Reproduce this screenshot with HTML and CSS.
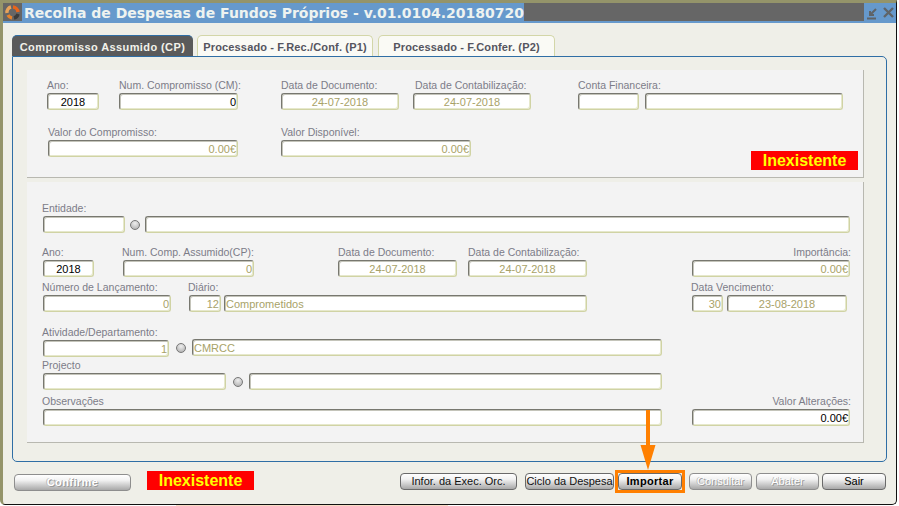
FILE: index.html
```html
<!DOCTYPE html>
<html lang="pt-PT">
<head>
  <meta charset="UTF-8">
  <title>Recolha de Despesas de Fundos Próprios</title>
  <link rel="stylesheet" href="styles.css">
</head>
<body>

  <div class="janela">

    <div class="titulo">
      <div class="titulo-icone">
        <svg width="17" height="17" viewBox="0 0 17 17">
          <path d="M9 3 A5.5 5.5 0 0 1 14 8" fill="none" stroke="#e8651a" stroke-width="3.4"/>
          <path d="M3 9 A5.5 5.5 0 0 1 7 3" fill="none" stroke="#e8a35a" stroke-width="3.4"/>
          <path d="M4 11 A5.5 5.5 0 0 0 8 14" fill="none" stroke="#e8832a" stroke-width="3.4"/>
          <path d="M10 14 A5.5 5.5 0 0 0 14 10" fill="none" stroke="#3c3c3c" stroke-width="3.4"/>
        </svg>
      </div>
      <div class="titulo-texto">Recolha de Despesas de Fundos Próprios - v.01.0104.20180720</div>
      <div class="titulo-botoes">
        <svg width="32" height="20" viewBox="0 0 32 20">
          <path d="M3 15.5 H12 M12 6 L6 12 M6 8 V12 H10" fill="none" stroke="#5f6468" stroke-width="2"/>
          <path d="M20 5 L29 14 M29 5 L20 14" fill="none" stroke="#5f6468" stroke-width="2.4"/>
        </svg>
      </div>
    </div>

    <div class="tabs">
      <div class="tab ativo">Compromisso Assumido (CP)</div>
      <div class="tab tab-p1">Processado - F.Rec./Conf. (P1)</div>
      <div class="tab tab-p2">Processado - F.Confer. (P2)</div>
    </div>

    <div class="tab-corpo">

      <div class="painel painel-cm">
        <div class="linha">
          <div class="campo c-ano-cm"><label>Ano:</label><div class="caixa centro preto">2018</div></div>
          <div class="campo c-num-cm"><label>Num. Compromisso (CM):</label><div class="caixa direita preto">0</div></div>
          <div class="campo c-doc-cm"><label>Data de Documento:</label><div class="caixa centro">24-07-2018</div></div>
          <div class="campo c-cont-cm"><label class="desvio">Data de Contabilização:</label><div class="caixa centro">24-07-2018</div></div>
          <div class="campo c-conta"><label>Conta Financeira:</label><div class="caixa"></div></div>
          <div class="campo c-conta-nome"><label></label><div class="caixa"></div></div>
        </div>
        <div class="linha linha-valor">
          <div class="campo c-valor-cm"><label>Valor do Compromisso:</label><div class="caixa direita">0.00€</div></div>
          <div class="campo c-disp"><label>Valor Disponível:</label><div class="caixa direita">0.00€</div></div>
          <div class="aviso aviso-cm">Inexistente</div>
        </div>
      </div>

      <div class="painel painel-cp">
        <div class="linha">
          <div class="campo c-ent"><label>Entidade:</label><div class="caixa"></div></div>
          <span class="bola"></span>
          <div class="campo c-ent-nome"><label></label><div class="caixa"></div></div>
        </div>
        <div class="linha l2">
          <div class="campo c-ano"><label>Ano:</label><div class="caixa centro preto">2018</div></div>
          <div class="campo c-num"><label>Num. Comp. Assumido(CP):</label><div class="caixa direita">0</div></div>
          <div class="campo c-doc"><label>Data de Documento:</label><div class="caixa centro">24-07-2018</div></div>
          <div class="campo c-cont"><label>Data de Contabilização:</label><div class="caixa centro">24-07-2018</div></div>
          <div class="campo c-imp"><label class="direita">Importância:</label><div class="caixa direita">0.00€</div></div>
        </div>
        <div class="linha l3">
          <div class="campo c-lanc"><label>Número de Lançamento:</label><div class="caixa direita">0</div></div>
          <div class="campo c-diario"><label>Diário:</label><div class="caixa direita">12</div></div>
          <div class="campo c-diario-nome"><label></label><div class="caixa">Comprometidos</div></div>
          <div class="campo c-dias"><label>Data Vencimento:</label><div class="caixa direita">30</div></div>
          <div class="campo c-venc"><label></label><div class="caixa centro">23-08-2018</div></div>
        </div>
        <div class="linha l4">
          <div class="campo c-ativ"><label>Atividade/Departamento:</label><div class="caixa direita">1</div></div>
          <span class="bola bola-ativ"></span>
          <div class="campo c-ativ-nome"><label></label><div class="caixa">CMRCC</div></div>
        </div>
        <div class="linha l5">
          <div class="campo c-proj"><label>Projecto</label><div class="caixa"></div></div>
          <span class="bola bola-proj"></span>
          <div class="campo c-proj-nome"><label></label><div class="caixa"></div></div>
        </div>
        <div class="linha l6">
          <div class="campo c-obs"><label>Observações</label><div class="caixa"></div></div>
          <div class="campo c-alt"><label class="direita">Valor Alterações:</label><div class="caixa direita preto">0.00€</div></div>
        </div>
      </div>

    </div>

    <div class="rodape">
      <button class="btn inativo b-confirme">Confirme</button>
      <div class="aviso aviso-rodape">Inexistente</div>
      <button class="btn b-infor">Infor. da Exec. Orc.</button>
      <button class="btn b-ciclo">Ciclo da Despesa</button>
      <div class="destaque"><button class="btn b-importar">Importar</button></div>
      <button class="btn inativo b-consultar">Consultar</button>
      <button class="btn inativo b-abater">Abater</button>
      <button class="btn b-sair">Sair</button>
    </div>

    <!-- seta por cima do formulário -->
    <svg class="seta" width="16" height="61" viewBox="0 0 16 61">
      <path d="M6 0 H10 V35 H15.5 L8 60 L0.5 35 H6 Z" fill="#ff8000"/>
    </svg>
  </div>

  <div class="resto"></div>

</body>
</html>
```

FILE: styles.css
```css
body {
  margin: 0;
  background-color: #fff;
  font-family: 'Liberation Sans', Arial, sans-serif;
  font-size: 11px;
  overflow: hidden;
}

.janela {
  position: relative;
  box-sizing: border-box;
  width: 897px;
  height: 505px;
  background-color: #efefe8;
  border-top: 3px solid #94946a;
  border-left: 3px solid #94946a;
  border-right: 1px solid #111;
  border-bottom: 1px solid #111;
  border-bottom-left-radius: 5px;
  border-bottom-right-radius: 5px;
}

.resto {
  width: 272px;
  height: 1px;
  margin-left: 176px;
  background-color: #f8dcc4;
}

/* barra de titulo */
.titulo {
  display: flex;
  height: 20px;
  background-color: #666;
  box-shadow: inset 0 -2px 0 #6699cc;
}

.titulo-icone {
  width: 19px;
  padding: 1px 0 0 1px;
  box-sizing: border-box;
}

.titulo-texto {
  width: 502px;
  padding-left: 2px;
  box-sizing: border-box;
  background-color: #6699cc;
  color: #eef3f0;
  font-family: 'DejaVu Sans', Verdana, sans-serif;
  font-weight: bold;
  font-size: 14px;
  line-height: 20px;
  white-space: nowrap;
}

.titulo-botoes {
  width: 32px;
  height: 20px;
  margin-left: auto;
  background-color: #6699cc;
}

/* separadores */
.tabs {
  display: flex;
  margin: 12px 0 0 9px;
  height: 21px;
}

.tab {
  box-sizing: border-box;
  height: 21px;
  margin-right: 4px;
  background-color: #fafaf5;
  border: 1px solid #d3d6a8;
  border-bottom: 0;
  border-radius: 5px 5px 0 0;
  color: #55555f;
  font-weight: bold;
  font-size: 11px;
  line-height: 22px;
  text-align: center;
  letter-spacing: 0.15px;
  white-space: nowrap;
}

.tab.ativo {
  width: 181px;
  background-color: #5a5a5a;
  border: 0;
  border-top: 1px solid #2f6ea5;
  color: #f2f2ea;
  letter-spacing: 0.4px;
}

.tab-p1 { width: 176px; }
.tab-p2 { width: 177px; margin-left: 1px; }

.tab-corpo {
  box-sizing: border-box;
  width: 875px;
  height: 406px;
  margin-left: 9px;
  padding: 13px 0 0 14px;
  border: 1px solid #2f6ea5;
  border-top-right-radius: 5px;
  border-bottom-left-radius: 5px;
  border-bottom-right-radius: 5px;
}

/* paineis */
.painel {
  box-sizing: border-box;
  width: 837px;
  background-color: #f3f3f3;
  border-right: 1px solid #b8b8b0;
  border-bottom: 1px solid #b8b8b0;
}

.painel-cm {
  height: 108px;
  padding-top: 8px;
}

.painel-cp {
  height: 261px;
  margin-top: 4px;
  padding-top: 19px;
}

.linha {
  display: flex;
  align-items: flex-start;
}

.linha-valor { margin-top: 15px; }
.l2 { margin-top: 12px; }
.l3 { margin-top: 3px; }
.l4 { margin-top: 13px; }
.l5 { margin-top: 1px; }
.l6 { margin-top: 4px; }

.campo label {
  display: block;
  height: 14px;
  margin-bottom: 1px;
  color: #7c7c88;
  font-size: 10.5px;
  line-height: 14px;
  white-space: nowrap;
}

.campo label.direita { text-align: right; }
.campo label.desvio { margin-left: 2px; }

.painel-cp label {
  margin-left: -1px;
  margin-right: -1px;
}

.painel-cp .c-doc label,
.painel-cp .c-cont label {
  margin-left: 0;
}

.caixa {
  box-sizing: border-box;
  height: 17px;
  padding: 0 1px;
  background-color: #fff;
  border: 1px solid #d0d3a4;
  border-top-color: #77776f;
  border-left-color: #77776f;
  border-radius: 3px;
  box-shadow: inset 1px 1px 0 #c4c4ba, inset -1px -1px 0 #e6e8cc;
  color: #a8a268;
  font-size: 11px;
  line-height: 16px;
  white-space: nowrap;
  overflow: hidden;
}

.centro { text-align: center; }
.direita { text-align: right; }
.preto { color: #000; }

/* painel de cima */
.c-ano-cm { width: 52px; margin-left: 20px; }
.c-num-cm { width: 119px; margin-left: 20px; }
.c-doc-cm { width: 118px; margin-left: 43px; }
.c-cont-cm { width: 118px; margin-left: 14px; }
.c-conta { width: 61px; margin-left: 47px; }
.c-conta-nome { width: 198px; margin-left: 6px; }
.c-valor-cm { width: 190px; margin-left: 21px; }
.c-disp { width: 190px; margin-left: 43px; }

.aviso {
  box-sizing: border-box;
  width: 107px;
  height: 19px;
  background-color: #f00;
  color: #ff0;
  font-weight: bold;
  font-size: 16px;
  line-height: 19px;
  text-align: center;
}

.aviso-cm {
  margin: 26px 0 0 280px;
}

/* painel de baixo */
.bola {
  box-sizing: border-box;
  width: 10px;
  height: 10px;
  margin: 19px 0 0 5px;
  border: 1px solid #777;
  border-radius: 50%;
  background: radial-gradient(circle at 50% 30%, #eee, #aaa);
}

.bola-ativ { margin-left: 7px; margin-top: 18px; }
.bola-proj { margin-left: 7px; }

.c-ent { width: 82px; margin-left: 16px; }
.c-ent-nome { width: 705px; margin-left: 5px; }
.c-ano { width: 51px; margin-left: 16px; }
.c-num { width: 131px; margin-left: 29px; }
.c-doc { width: 119px; margin-left: 84px; }
.c-cont { width: 119px; margin-left: 11px; }
.c-imp { width: 158px; margin-left: 105px; }
.c-lanc { width: 128px; margin-left: 16px; }
.c-diario { width: 32px; margin-left: 18px; }
.c-diario-nome { width: 363px; margin-left: 3px; }
.c-dias { width: 31px; margin-left: 105px; }
.c-venc { width: 120px; margin-left: 4px; }
.c-ativ { width: 126px; margin-left: 16px; }
.c-ativ-nome { width: 470px; margin-left: 6px; margin-top: -1px; }
.c-proj { width: 183px; margin-left: 16px; }
.c-proj-nome { width: 413px; margin-left: 6px; }
.c-obs { width: 619px; margin-left: 16px; }
.c-alt { width: 158px; margin-left: 30px; }

/* botoes */
.rodape {
  display: flex;
  align-items: flex-start;
  padding-top: 11px;
}

.btn {
  box-sizing: border-box;
  height: 17px;
  padding: 0;
  background: linear-gradient(#fff 0%, #f2f2f2 35%, #a8a8a8 100%);
  border: 1px solid #6a6a6a;
  border-radius: 4px;
  color: #111;
  font-family: 'Liberation Sans', Arial, sans-serif;
  font-size: 11px;
  line-height: 15px;
  white-space: nowrap;
}

.btn.inativo {
  border-color: #8e8e8e;
  color: #fff;
  text-shadow: 1px 1px 0 #999, -1px 0 0 #bbb;
}

.b-confirme { width: 117px; margin: 1px 0 0 11px; font-weight: bold; letter-spacing: 0.4px; }
.aviso-rodape { margin: -2px 0 0 16px; }
.b-infor { width: 117px; margin-left: 146px; }
.b-ciclo { width: 89px; margin-left: 8px; }

.destaque {
  box-sizing: border-box;
  width: 70px;
  height: 23px;
  margin: -3px 0 0 1px;
  border: 3px solid #ff7f00;
}

.b-importar {
  display: block;
  width: 64px;
  font-weight: bold;
  color: #000;
  letter-spacing: 0.3px;
}

.b-consultar { width: 63px; margin-left: 4px; }
.b-abater { width: 63px; margin-left: 4px; }
.b-sair { width: 64px; margin-left: 3px; color: #000; }

.seta {
  position: absolute;
  left: 637px;
  top: 407px;
}
```
